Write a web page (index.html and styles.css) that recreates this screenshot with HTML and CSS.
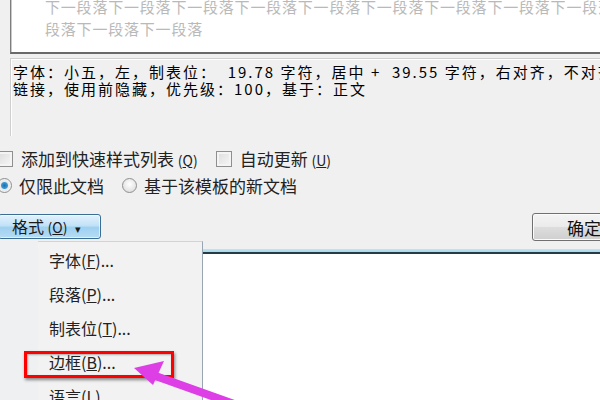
FILE: index.html
```html
<!DOCTYPE html>
<html lang="zh">
<head>
<meta charset="utf-8">
<link rel="stylesheet" href="styles.css">
</head>
<body>
<div class="page">
  <div class="dialog">
    <div class="preview">
      <div class="pline">下一段落下一段落下一段落下一段落下一段落下一段落下一段落下一段落下一段落下一段落</div>
      <div class="pline">段落下一段落下一段落</div>
    </div>
    <div class="desc">
      <div class="dline">字体：小五，左，制表位：  19.78 字符，居中 +  39.55 字符，右对齐，不对齐</div>
      <div class="dline">链接，使用前隐藏，优先级：100，基于：正文</div>
    </div>
    <div class="opts">
      <div class="row">
        <span class="check first"></span>
        <span class="label">添加到快速样式列表 <span class="key">(<u>Q</u>)</span></span>
        <span class="check"></span>
        <span class="label">自动更新 <span class="key">(<u>U</u>)</span></span>
      </div>
      <div class="row">
        <span class="radio first on"></span>
        <span class="label">仅限此文档</span>
        <span class="radio"></span>
        <span class="label">基于该模板的新文档</span>
      </div>
    </div>
    <div class="btnrow">
      <button class="fmt">格式 <span class="key">(<u>O</u>)</span> <span class="caret">▾</span></button>
      <button class="ok">确定</button>
    </div>
  </div>
  <div class="lower">
    <div class="menuwrap">
      <div class="gutter"></div>
      <div class="menu">
        <div class="item">字体(<u>F</u>)...</div>
        <div class="item">段落(<u>P</u>)...</div>
        <div class="item">制表位(<u>T</u>)...</div>
        <div class="item">边框(<u>B</u>)...</div>
        <div class="item">语言(<u>L</u>)...</div>
      </div>
    </div>
    <div class="doc">
      <div class="docedge"></div>
      <div class="docbody"></div>
    </div>
  </div>
  <div class="highlight"></div>
  <svg class="arrow" width="600" height="400" viewBox="0 0 600 400">
    <line x1="150" y1="374" x2="262" y2="414" stroke="#dd3ee6" stroke-width="8" stroke-linecap="round"/>
    <polygon points="134,368 164,361 153,385" fill="#dd3ee6"/>
  </svg>
</div>
</body>
</html>
```

FILE: styles.css
```css
* { box-sizing: border-box; }
html, body { margin: 0; padding: 0; }
body {
  width: 600px;
  height: 400px;
  overflow: hidden;
  background: #f0f0f0;
  font-family: "Noto Sans CJK SC", "Noto Sans", sans-serif;
  color: #1e1e1e;
}
.page {
  position: relative;
  width: 600px;
  height: 400px;
  overflow: hidden;
}
.dialog {
  height: 241px;
  display: flex;
  flex-direction: column;
}
.preview {
  margin: -5px -10px 0 10px;
  height: 59px;
  background: #fff;
  border-left: 1px solid #7d7d7d;
  border-bottom: 2px solid #6a6a6a;
  box-shadow: inset 1px 0 0 #c9c9c9;
  padding: 1px 0 0 34px;
  overflow: hidden;
}
.pline {
  font-size: 15px;
  line-height: 22px;
  letter-spacing: 0.8px;
  color: #b9b9b9;
  white-space: nowrap;
}
.desc {
  margin: 4px -10px 0 10px;
  height: 78px;
  border-top: 1px solid #cfcfcf;
  border-left: 1px solid #cfcfcf;
  box-shadow: inset 1px 1px 0 #ffffff;
  background: #f0f0f0;
  padding: 4px 0 0 2px;
  overflow: hidden;
}
.dline {
  font-size: 15px;
  line-height: 17px;
  letter-spacing: 2px;
  color: #000;
  white-space: pre;
}
.opts {
  margin-top: 9px;
}
.row {
  height: 27px;
  display: flex;
  align-items: center;
  font-size: 17px;
  white-space: nowrap;
}
.label { color: #222; }
.key { font-size: 14px; }
.check {
  width: 16px;
  height: 16px;
  border: 1px solid #8e8f8f;
  background: linear-gradient(135deg, #dcdcdc, #f7f7f7);
  box-shadow: inset 0 0 0 2px #f4f4f4;
  margin: 0 8px 0 18px;
}
.check.first { margin-left: -3px; }
.radio {
  width: 15px;
  height: 15px;
  border-radius: 50%;
  border: 1px solid #8e8f8f;
  background: radial-gradient(circle at 50% 40%, #ffffff, #d6d6d6);
  margin: 0 7px 0 18px;
}
.radio.first { margin-left: -3px; }
.radio.on {
  background: radial-gradient(circle, #1b6fb0 0, #3a97d6 3px, #e8e8e8 4px, #f4f4f4 7px);
}
.btnrow {
  margin-top: 14px;
  display: flex;
  justify-content: space-between;
  align-items: flex-start;
}
button {
  font-family: "Noto Sans CJK SC", "Noto Sans", sans-serif;
  padding: 0;
  cursor: default;
}
.fmt {
  margin-left: -2px;
  margin-top: 1px;
  width: 103px;
  height: 25px;
  border: 1px solid #3b6e94;
  border-radius: 3px;
  background: linear-gradient(#e3f2fc 0%, #c2e2f8 45%, #9fd0f0 55%, #b6dcf4 100%);
  box-shadow: inset 0 0 0 1px rgba(255,255,255,0.6);
  font-size: 16px;
  line-height: 22px;
  color: #1a1a1a;
  text-align: left;
  padding-left: 13px;
}
.fmt .caret { font-size: 11px; margin-left: 4px; }
.ok {
  margin-right: -40px;
  width: 108px;
  height: 28px;
  border: 1px solid #707070;
  border-radius: 3px;
  background: linear-gradient(#f4f4f4 0%, #ebebeb 48%, #dddddd 52%, #cfcfcf 100%);
  box-shadow: inset 0 0 0 1px #fbfbfb;
  font-size: 17px;
  color: #111;
  text-align: left;
  padding-left: 34px;
}
.lower {
  height: 159px;
  display: flex;
}
.menuwrap {
  width: 203px;
  display: flex;
}
.gutter {
  width: 38px;
  background: #eef0f2;
}
.menu {
  flex: 1;
  background: #f2f2f2;
  border-top: 1px solid #cfd4d8;
  border-right: 1px solid #97a6b2;
  padding: 1px 0 0 11px;
}
.item {
  height: 34px;
  line-height: 34px;
  font-size: 16px;
  color: #222;
  white-space: nowrap;
}
.doc {
  flex: 1;
  display: flex;
  flex-direction: column;
}
.docedge {
  margin-top: 8px;
  height: 5px;
  background: linear-gradient(#bfe6f2 0, #a6d8ea 60%, #263c44 60%, #263c44 100%);
}
.docbody {
  flex: 1;
  background: #ffffff;
}
.highlight {
  position: absolute;
  left: 24px;
  top: 351px;
  width: 150px;
  height: 27px;
  border: 3px solid #ff0000;
  box-shadow: 1px 2px 3px rgba(0,0,0,0.45), inset 1px 1px 2px rgba(0,0,0,0.3);
}
.arrow {
  position: absolute;
  left: 0;
  top: 0;
  pointer-events: none;
}
```
